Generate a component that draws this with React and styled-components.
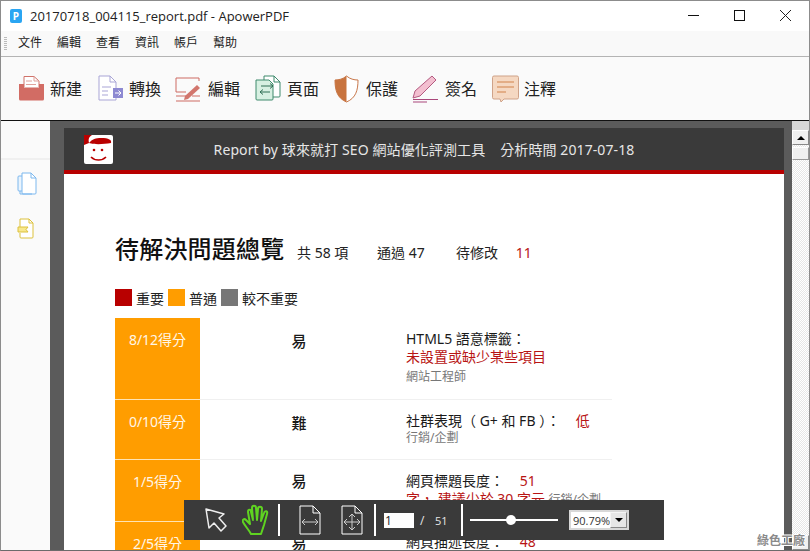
import React from "react";
import styled, { createGlobalStyle } from "styled-components";

const GlobalStyle = createGlobalStyle`
  html, body {
    margin: 0;
    padding: 0;
    background: #fff;
  }
  body {
    font-family: "Open Sans", "Noto Sans CJK TC", sans-serif;
  }
  * {
    box-sizing: border-box;
  }
`;

const Win = styled.div`
  position: relative;
  width: 810px;
  height: 551px;
  overflow: hidden;
  display: flex;
  flex-direction: column;
  border: 1px solid #8c8c8c;
  border-bottom-color: #6b6b6b;
  background: #fff;
`;

const TitleBar = styled.div`
  height: 30px;
  flex: none;
  display: flex;
  align-items: center;
  padding-left: 9px;
  background: #fff;
`;

const AppIcon = styled.div`
  width: 12px;
  height: 14px;
  border-radius: 2px;
  background: #2aa5f2;
  color: #fff;
  font-size: 10px;
  font-weight: 700;
  line-height: 14px;
  text-align: center;
`;

const TitleText = styled.div`
  margin-left: 8px;
  font-size: 13px;
  color: #222;
`;

const WinButtons = styled.div`
  margin-left: auto;
  display: flex;
  height: 100%;
  padding-right: 1px;
`;

const WinButton = styled.div`
  width: 46px;
  height: 100%;
  display: flex;
  align-items: center;
  justify-content: center;
  padding-bottom: 2px;
`;

const MenuBar = styled.div`
  height: 26px;
  flex: none;
  display: flex;
  align-items: center;
  gap: 15px;
  padding: 0 0 4px 17px;
  background: #f9f9f9;
  border-bottom: 1px solid #b4b4b4;
  position: relative;
  font-size: 12px;
  color: #222;
  font-family: "Noto Sans CJK TC", sans-serif;
`;

const Grip = styled.div`
  position: absolute;
  left: 3px;
  top: 6px;
  width: 3px;
  height: 13px;
  background: repeating-linear-gradient(#bbb 0 1px, transparent 1px 2px);
`;

const ToolBar = styled.div`
  height: 64px;
  flex: none;
  display: flex;
  align-items: center;
  gap: 15px;
  padding-left: 16px;
  background: #fafafa;
  border-bottom: 1px solid #111;
`;

const Tool = styled.div`
  display: flex;
  align-items: center;
  gap: 5px;
  width: 64px;
  font-size: 16px;
  color: #222;
  font-family: "Noto Sans CJK TC", sans-serif;
  white-space: nowrap;

  svg {
    flex: none;
  }

  span {
    margin-top: -1px;
  }
`;

const Body = styled.div`
  flex: 1;
  min-height: 0;
  display: flex;
`;

const SideBar = styled.div`
  width: 49px;
  flex: none;
  background: #fafafa;
  display: flex;
  flex-direction: column;
`;

const SideTop = styled.div`
  width: 100%;
  height: 39px;
  flex: none;
  margin-bottom: 12px;
  border-bottom: 2px solid #f0f0f0;
`;

const SideIcons = styled.div`
  display: flex;
  flex-direction: column;
  align-items: flex-start;
  gap: 22px;
  padding-left: 16px;
`;

const Viewer = styled.div`
  flex: 1;
  min-width: 0;
  background: #5b5b5b;
  padding: 7px 8px 0 14px;
  overflow: hidden;
`;

const Page = styled.div`
  background: #fff;
  height: 600px;
`;

const PageHeader = styled.div`
  height: 46px;
  display: flex;
  align-items: center;
  padding-left: 20px;
  background: #3a3a3a;
  border-bottom: 4px solid #b80000;
`;

const HeaderTitle = styled.div`
  flex: 1;
  padding-right: 49px;
  text-align: center;
  font-size: 14px;
  letter-spacing: 0.1px;
  color: #e6e6e6;
  white-space: pre;
  font-family: "Noto Sans", "Noto Sans CJK TC", sans-serif;
`;

const Content = styled.div`
  padding: 56px 0 0 51px;
  font-family: "Noto Sans", "Noto Sans CJK TC", sans-serif;
`;

const HeadRow = styled.div`
  display: flex;
  align-items: baseline;
  height: 36px;
  color: #222;
`;

const Heading = styled.div`
  font-size: 24px;
  line-height: 36px;
  font-weight: 500;
  letter-spacing: 0.2px;
  color: #111;
  width: 182px;
  font-family: "Noto Sans CJK TC", sans-serif;
`;

const Stat = styled.div`
  font-size: 14px;
  width: ${(p) => p.$w}px;
  white-space: pre;
`;

const RedNum = styled.span`
  color: #b81414;
  margin-left: 14px;
`;

const Legend = styled.div`
  display: flex;
  align-items: center;
  margin-top: 23px;
  height: 17px;
  font-size: 14px;
  color: #222;
`;

const Swatch = styled.span`
  width: 17px;
  height: 17px;
  background: ${(p) => p.$c};
  margin-right: 4px;
`;

const LegendLabel = styled.span`
  margin-right: 4px;
`;

const Table = styled.div`
  width: 497px;
  margin-top: 12px;
`;

const Row = styled.div`
  display: grid;
  grid-template-columns: 85px 198px 1fr;
  height: ${(p) => p.$h}px;
  border-bottom: 1px solid #f0f0f0;
`;

const Score = styled.div`
  background: #ff9d00;
  color: #fff6e6;
  font-size: 14px;
  text-align: center;
  padding-top: 12px;
  line-height: 20px;
  border-bottom: 1px solid #ffe3b3;
  margin-bottom: -1px;
`;

const Level = styled.div`
  text-align: center;
  font-size: 15px;
  font-weight: 500;
  color: #1a1a1a;
  padding-top: ${(p) => p.$top}px;
  line-height: 20px;
`;

const Detail = styled.div`
  padding: ${(p) => p.$top}px 0 0 8px;
  font-size: 14px;
  line-height: 18px;
  color: #1a1a1a;
  white-space: pre-wrap;
`;

const Red = styled.span`
  color: #b81414;
  margin-left: ${(p) => p.$ml || 0}px;
`;

const Sub = styled.span`
  font-size: 12px;
  color: #777;
`;

const SubLine = styled.div`
  font-size: 12px;
  color: #777;
  line-height: ${(p) => p.$lh}px;
`;

const ScrollBar = styled.div`
  width: 17px;
  flex: none;
  display: flex;
  flex-direction: column;
  background: repeating-conic-gradient(#fff 0 25%, #e6e6e6 0 50%) 0 0 / 2px 2px;
`;

const ScrollTop = styled.div`
  height: 9px;
  flex: none;
  background: #d8d8d8;
`;

const ScrollBtn = styled.div`
  height: 15px;
  flex: none;
  background: #f0f0f0;
  border: 1px solid #fff;
  border-right-color: #888;
  border-bottom-color: #888;
  display: flex;
  align-items: center;
  justify-content: center;
  margin-top: ${(p) => (p.$end ? "auto" : "0")};
`;

const Thumb = styled.div`
  height: 13px;
  flex: none;
  margin-top: 2px;
  background: #f0f0f0;
  border: 1px solid #fff;
  border-right-color: #999;
  border-bottom-color: #999;
`;

const Arrow = styled.div`
  width: 0;
  height: 0;
  border-left: 4px solid transparent;
  border-right: 4px solid transparent;
  ${(p) => (p.$down ? "border-top: 4px solid #000;" : "border-bottom: 4px solid #000;")}
`;

const FloatBar = styled.div`
  position: absolute;
  left: 183px;
  top: 499px;
  width: 480px;
  height: 40px;
  background: #3a3a3a;
  display: flex;
  align-items: center;
  color: #e6e6e6;
  font-size: 12px;
`;

const Sep = styled.div`
  width: 2px;
  height: 32px;
  background: #fff;
  flex: none;
  margin-left: ${(p) => p.$l}px;
`;

const BarIcon = styled.div`
  display: flex;
  flex: none;
  margin-left: ${(p) => p.$l}px;
`;

const PageInput = styled.div`
  width: 30px;
  height: 15px;
  margin-left: 8px;
  background: #fff;
  color: #222;
  font-size: 12px;
  line-height: 15px;
  padding-left: 1px;
`;

const Slash = styled.span`
  margin-left: 6px;
  width: 4px;
`;

const PageCount = styled.span`
  margin-left: 11px;
  font-size: 11px;
  width: 13px;
`;

const Slider = styled.div`
  position: relative;
  width: 88px;
  height: 2px;
  margin-left: 7px;
  background: #fff;
`;

const Knob = styled.div`
  position: absolute;
  left: 36px;
  top: -4px;
  width: 10px;
  height: 10px;
  border-radius: 50%;
  background: #fff;
`;

const ZoomBox = styled.div`
  width: 60px;
  height: 20px;
  margin-left: 11px;
  background: #fff;
  border: 2px solid #d8d8d8;
  display: flex;
  align-items: center;
  color: #333;
  font-size: 11px;
  padding-left: 2px;
`;

const ZoomBtn = styled.div`
  margin-left: auto;
  width: 17px;
  height: 100%;
  background: #e6e6e6;
  border: 1px solid #f5f5f5;
  border-right-color: #888;
  border-bottom-color: #888;
  display: flex;
  align-items: center;
  justify-content: center;
`;

const Watermark = styled.div`
  position: absolute;
  right: 4px;
  bottom: 2px;
  font-size: 12px;
  font-weight: 700;
  color: #8a8a8a;
  text-shadow: -1px 0 #fff, 1px 0 #fff, 0 -1px #fff, 0 1px #fff;
  font-family: "Noto Sans CJK TC", sans-serif;
`;

const NewIcon = () => (
  <svg width="28" height="28" viewBox="-1 0 28 28">
    <path d="M6 12V1.500h10l5 4.500v6" fill="#fff" stroke="#d0736a" />
    <path d="M16 1.500V6h5M8 6h6M8 9.500h10" fill="none" stroke="#e0a29c" />
    <path d="M1 9h5v3.500h15V9h5v15a1.500 1.500 0 0 1-1.500 1.500h-22A1.500 1.500 0 0 1 1 24z" fill="#d26c64" />
  </svg>
);

const ConvertIcon = () => (
  <svg width="28" height="28" viewBox="-2 0 28 28">
    <path d="M1 1h11l6 6v18H1z" fill="#fff" stroke="#a9a5d6" />
    <path d="M12 1v6h6" fill="none" stroke="#a9a5d6" />
    <path d="M4 12h9M4 16h6M4 20h6" stroke="#a9a5d6" />
    <rect x="15" y="13" width="10" height="10" fill="#8d89d2" />
    <path d="M17 18h6M20.500 15.500L23 18l-2.500 2.500" fill="none" stroke="#fff" />
  </svg>
);

const EditIcon = () => (
  <svg width="28" height="28" viewBox="0 -1 28 28">
    <path d="M1 2h23v3M1 2v14h10" fill="none" stroke="#cd6b62" />
    <path d="M1 20h10M1 25h24M17 20h8" stroke="#cd6b62" />
    <path d="M22 9l3 3-12 11-4 1 1-4z" fill="#d2766d" />
  </svg>
);

const PagesIcon = () => (
  <svg width="28" height="28" viewBox="-1 0 28 28">
    <path d="M9 5V1h10l6 6v14a1 1 0 0 1-1 1h-6" fill="#fff" stroke="#3f8a6d" />
    <path d="M19 1v6h6" fill="none" stroke="#3f8a6d" />
    <path d="M1 5h13l4 4v15a1 1 0 0 1-1 1H2a1 1 0 0 1-1-1z" fill="#d7f0e2" stroke="#3f8a6d" />
    <path d="M6 11h12M15 8.500L18 11l-3 2.500M15 17H5M8 14.500L5 17l3 2.500" fill="none" stroke="#2f6f55" />
  </svg>
);

const ShieldIcon = () => (
  <svg width="28" height="28" viewBox="-1 0 28 28">
    <path d="M12.500 1C9 4 5 5 1 5c0 10 2 18 11.500 22C22 23 24 15 24 5c-4 0-8-1-11.500-4z" fill="#fff" stroke="#c8774a" />
    <path d="M12.500 1C9 4 5 5 1 5c0 10 2 18 11.500 22z" fill="#c8743f" />
  </svg>
);

const SignIcon = () => (
  <svg width="28" height="28" viewBox="0 0 28 28">
    <path d="M20 1l4 4L8 21l-7 2 2-7z" fill="#f3bfd0" stroke="#b35a80" />
    <path d="M1 24.500h25M1 27h14" stroke="#a9477a" />
  </svg>
);

const NoteIcon = () => (
  <svg width="28" height="28" viewBox="0 0 28 28">
    <path d="M3 1h23a1.500 1.500 0 0 1 1.500 1.500v20a1.500 1.500 0 0 1-1.500 1.500H13l-3 3-1-3H3a1.500 1.500 0 0 1-1.500-1.500v-20A1.500 1.500 0 0 1 3 1z" fill="#f5d8c2" stroke="#cfa288" />
    <path d="M6 7h17M6 12h17M6 17h9" stroke="#dd9e73" strokeWidth="1.500" />
  </svg>
);

const DocsIcon = () => (
  <svg width="20" height="24" viewBox="0 0 20 24">
    <path d="M5 19H2a1 1 0 0 1-1-1V5a1 1 0 0 1 1-1h3" fill="#eaf4fd" stroke="#7db8ee" />
    <path d="M5 1h9l5 5v15a1 1 0 0 1-1 1H6a1 1 0 0 1-1-1z" fill="#fff" stroke="#7db8ee" />
    <path d="M14 1v5h5" fill="none" stroke="#7db8ee" />
    <path d="M3 19v3h12" fill="none" stroke="#7db8ee" />
  </svg>
);

const TagIcon = () => (
  <svg width="18" height="21" viewBox="0 0 18 21">
    <path d="M3 9V1h9l4 4v14a1 1 0 0 1-1 1H4a1 1 0 0 1-1-1v-4" fill="#fff" stroke="#dcc13c" />
    <path d="M12 1v4h4" fill="none" stroke="#dcc13c" />
    <path d="M1 9h10l-2 2.500 2 2.500H1z" fill="#f8e88c" stroke="#dcc13c" />
  </svg>
);

const Mascot = () => (
  <svg width="29" height="29" viewBox="0 0 29 29">
    <rect width="29" height="29" rx="2" fill="#fff" />
    <path d="M0 0h8C5 2 4 4 5 8c7 2 15 1 22 0 1-3-2-5-10-5-5 0-9 1-12 5L0 10z" fill="#b80000" />
    <circle cx="10" cy="15" r="1.300" fill="#b80000" />
    <circle cx="18" cy="15" r="1.300" fill="#b80000" />
    <path d="M7 22c4 4 11 4 15 0" fill="none" stroke="#b80000" strokeWidth="1.600" />
  </svg>
);

const PointerIcon = () => (
  <svg width="23" height="26" viewBox="0 0 23 26">
    <path d="M2 2l3 19 5-5 7 8 5-5-7-8 5-4z" fill="none" stroke="#eee" strokeWidth="1.500" strokeLinejoin="round" />
  </svg>
);

const HandIcon = () => (
  <svg width="30" height="32" viewBox="0 0 30 32">
    <path
      d="M9 30c-2-4-6-8-8-12-1-2 1-4 3-2l4 4-2-12c0-3 3-3 3 0l2 8-1-12c0-3 4-3 4 0l1 12 1-11c0-3 4-3 4 0l-1 12 3-8c1-3 4-2 3 1l-3 11c-1 3-2 6-3 9z"
      fill="none"
      stroke="#5fd321"
      strokeWidth="2"
      strokeLinejoin="round"
    />
  </svg>
);

const PageFitIcon = ({ cross }) => (
  <svg width="22" height="30" viewBox="0 0 22 30">
    <path d="M1 1h13l7 7v21H1z" fill="none" stroke="#fff" />
    <path d="M14 1v7h7" fill="none" stroke="#fff" />
    <path d="M3 17h16M6 14l-3 3 3 3M16 14l3 3-3 3" fill="none" stroke="#ccc" />
    {cross && <path d="M11 9v16M8 12l3-3 3 3M8 22l3 3 3-3" fill="none" stroke="#ccc" />}
  </svg>
);

const tools = [
  { label: "新建", icon: <NewIcon /> },
  { label: "轉換", icon: <ConvertIcon /> },
  { label: "編輯", icon: <EditIcon /> },
  { label: "頁面", icon: <PagesIcon /> },
  { label: "保護", icon: <ShieldIcon /> },
  { label: "簽名", icon: <SignIcon /> },
  { label: "注釋", icon: <NoteIcon /> },
];

const menus = ["文件", "編輯", "查看", "資訊", "帳戶", "幫助"];

export default function App() {
  return (
    <>
      <GlobalStyle />
      <Win>
        <TitleBar>
          <AppIcon>P</AppIcon>
          <TitleText>20170718_004115_report.pdf - ApowerPDF</TitleText>
          <WinButtons>
            <WinButton>
              <svg width="11" height="11" viewBox="0 0 11 11">
                <path d="M0 5.500h11" stroke="#111" />
              </svg>
            </WinButton>
            <WinButton>
              <svg width="11" height="11" viewBox="0 0 11 11">
                <rect x="0.500" y="0.500" width="10" height="10" fill="none" stroke="#111" />
              </svg>
            </WinButton>
            <WinButton>
              <svg width="11" height="11" viewBox="0 0 11 11">
                <path d="M0 0l11 11M11 0L0 11" stroke="#222" />
              </svg>
            </WinButton>
          </WinButtons>
        </TitleBar>

        <MenuBar>
          <Grip />
          {menus.map((m) => (
            <span key={m}>{m}</span>
          ))}
        </MenuBar>

        <ToolBar>
          {tools.map((t) => (
            <Tool key={t.label}>
              {t.icon}
              <span>{t.label}</span>
            </Tool>
          ))}
        </ToolBar>

        <Body>
          <SideBar>
            <SideTop />
            <SideIcons>
              <DocsIcon />
              <TagIcon />
            </SideIcons>
          </SideBar>

          <Viewer>
            <Page>
              <PageHeader>
                <Mascot />
                <HeaderTitle>Report by 球來就打 SEO 網站優化評測工具    分析時間 2017-07-18</HeaderTitle>
              </PageHeader>
              <Content>
                <HeadRow>
                  <Heading>待解決問題總覽</Heading>
                  <Stat $w={80}>共 58 項</Stat>
                  <Stat $w={79}>通過 47</Stat>
                  <Stat $w={120}>待修改 <RedNum>11</RedNum></Stat>
                </HeadRow>
                <Legend>
                  <Swatch $c="#b80000" />
                  <LegendLabel>重要</LegendLabel>
                  <Swatch $c="#ff9d00" />
                  <LegendLabel>普通</LegendLabel>
                  <Swatch $c="#777" />
                  <LegendLabel>較不重要</LegendLabel>
                </Legend>
                <Table>
                  <Row $h={82}>
                    <Score>8/12得分</Score>
                    <Level $top={13}>易</Level>
                    <Detail $top={12}>
                      HTML5 語意標籤：
                      <br />
                      <Red>未設置或缺少某些項目</Red>
                      <SubLine $lh={22}>網站工程師</SubLine>
                    </Detail>
                  </Row>
                  <Row $h={60}>
                    <Score>0/10得分</Score>
                    <Level $top={13}>難</Level>
                    <Detail $top={12}>
                      社群表現（ G+ 和 FB ）： <Red $ml={12}>低</Red>
                      <SubLine $lh={15}>行銷/企劃</SubLine>
                    </Detail>
                  </Row>
                  <Row $h={62}>
                    <Score>1/5得分</Score>
                    <Level $top={11}>易</Level>
                    <Detail $top={12}>
                      網頁標題長度： <Red $ml={12}>51</Red>
                      <br />
                      <Red>字， 建議少於 30 字元</Red> <Sub>行銷/企劃</Sub>
                    </Detail>
                  </Row>
                  <Row $h={62}>
                    <Score>2/5得分</Score>
                    <Level $top={11}>易</Level>
                    <Detail $top={11}>
                      網頁描述長度： <Red $ml={12}>48</Red>
                    </Detail>
                  </Row>
                </Table>
              </Content>
            </Page>
          </Viewer>

          <ScrollBar>
            <ScrollTop />
            <ScrollBtn>
              <Arrow />
            </ScrollBtn>
            <Thumb />
            <ScrollBtn $end>
              <Arrow $down />
            </ScrollBtn>
          </ScrollBar>
        </Body>

        <FloatBar>
          <BarIcon $l={20}>
            <PointerIcon />
          </BarIcon>
          <BarIcon $l={15}>
            <HandIcon />
          </BarIcon>
          <Sep $l={6} />
          <BarIcon $l={19}>
            <PageFitIcon />
          </BarIcon>
          <BarIcon $l={20}>
            <PageFitIcon cross />
          </BarIcon>
          <Sep $l={11} />
          <PageInput>1</PageInput>
          <Slash>/</Slash>
          <PageCount>51</PageCount>
          <Sep $l={13} />
          <Slider>
            <Knob />
          </Slider>
          <ZoomBox>
            90.79%
            <ZoomBtn>
              <Arrow $down />
            </ZoomBtn>
          </ZoomBox>
        </FloatBar>

        <Watermark>綠色工廠</Watermark>
      </Win>
    </>
  );
}
